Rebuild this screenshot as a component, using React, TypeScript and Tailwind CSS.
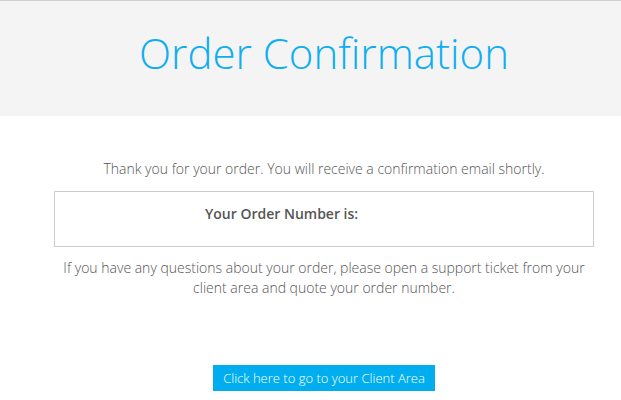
export default function App() {
  return (
    <div className="w-[621px] h-[400px] overflow-hidden bg-white" style={{ fontFamily: '"Open Sans", sans-serif' }}>
      <div className="w-[648px]">
        <div className="border-t border-[#cfcfcf] bg-[#f4f4f4] h-[116px] flex items-center justify-center">
          <h1 className="text-[42px] font-light text-[#0eaef0] leading-none mt-[-12px]">Order Confirmation</h1>
        </div>
        <div className="flex flex-col items-center pt-[43px]">
          <p className="text-[14px] font-light text-[#555] leading-[20px]">Thank you for your order. You will receive a confirmation email shortly.</p>
          <div className="mt-[12px] w-[540px] h-[56px] border border-[#cccccc] pt-[12px]">
            <div className="ml-[150px] text-[14px] font-semibold text-[#555] leading-[20px]">Your Order Number is:</div>
          </div>
          <p className="mt-[11px] w-[540px] text-center text-[14px] font-light text-[#555] leading-[20px]">
            If you have any questions about your order, please open a support ticket from your client area and quote your order number.
          </p>
          <button className="mt-[67px] h-[26px] px-[10px] bg-[#00aeef] text-white text-[13px] font-light leading-[20px]">Click here to go to your Client Area</button>
        </div>
      </div>
    </div>
  );
}
